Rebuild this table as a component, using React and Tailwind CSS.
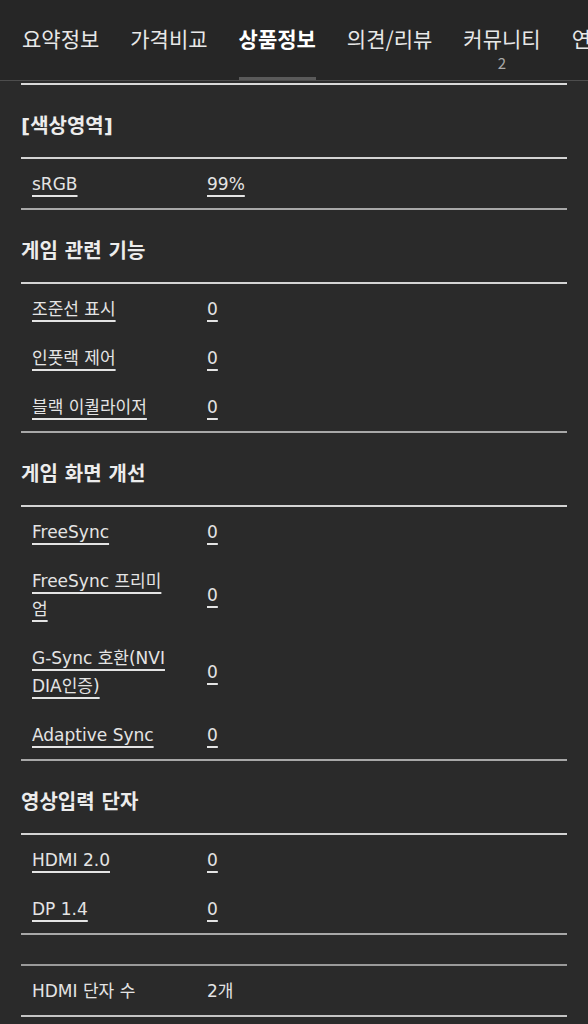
const tabs = [
  { label: '요약정보' },
  { label: '가격비교' },
  { label: '상품정보', active: true },
  { label: '의견/리뷰' },
  { label: '커뮤니티', count: 2 },
  { label: '연관상품' },
];

const sections = [
  { title: '[색상영역]', rows: [['sRGB', '99%']] },
  {
    title: '게임 관련 기능',
    rows: [['조준선 표시', '0'], ['인풋랙 제어', '0'], ['블랙 이퀄라이저', '0']],
  },
  {
    title: '게임 화면 개선',
    rows: [
      ['FreeSync', '0'],
      ['FreeSync 프리미엄', '0'],
      ['G-Sync 호환(NVIDIA인증)', '0'],
      ['Adaptive Sync', '0'],
    ],
  },
  { title: '영상입력 단자', rows: [['HDMI 2.0', '0'], ['DP 1.4', '0']] },
];

function Row({ label, value, link = true }) {
  const deco = link ? 'underline decoration-2 underline-offset-[5px]' : '';
  return (
    <div className="flex items-center py-[10.5px] text-[17px] leading-[28px] text-[#e4e4e4]">
      <div className="w-[186px] shrink-0 pl-[11px] pr-[35px] break-all">
        <span className={deco}>{label}</span>
      </div>
      <div className="flex-1">
        <span className={deco}>{value}</span>
      </div>
    </div>
  );
}

export default function App() {
  return (
    <div
      className="min-h-[1024px] bg-[#2a2a2a] text-[#e6e6e6]"
      style={{ fontFamily: '"DejaVu Sans", "Noto Sans CJK KR", sans-serif' }}
    >
      <div
        className="h-[81px] bg-[#262626] border-b border-[#4d4d4d] flex gap-[31px] pl-[22px] overflow-hidden whitespace-nowrap"
        style={{ fontFamily: '"Noto Sans CJK KR", "Noto Sans", sans-serif' }}
      >
        {tabs.map(t => (
          <div
            key={t.label}
            className={
              'shrink-0 h-[80px] flex flex-col items-center pt-[26px] ' +
              (t.active ? 'border-b-[3px] border-[#5a5a5a]' : '')
            }
          >
            <span
              className={
                'text-[21px] leading-[24px] ' +
                (t.active ? 'font-bold text-white' : 'text-[#e8e8e8]')
              }
            >
              {t.label}
            </span>
            {t.count && <span className="mt-[5px] text-[15px] leading-[16px] text-[#a8a8a8]">{t.count}</span>}
          </div>
        ))}
      </div>

      <div className="mx-[21px] mt-[2px] border-t-2 border-[#d8d8d8]">
        {sections.map(s => (
          <div key={s.title} className="border-b-2 border-[#a8a8a8]">
            <div className="pt-[27px] pb-[17px] border-b-2 border-[#d4d4d4] text-[20px] leading-[28px] font-bold text-[#ececec]">
              {s.title}
            </div>
            {s.rows.map(([l, v]) => (
              <Row key={l} label={l} value={v} />
            ))}
          </div>
        ))}
        <div className="h-[31px] border-b-2 border-[#9a9a9a]" />
        <div className="border-b-2 border-[#c4c4c4]">
          <Row label="HDMI 단자 수" value="2개" link={false} />
        </div>
      </div>
    </div>
  );
}
